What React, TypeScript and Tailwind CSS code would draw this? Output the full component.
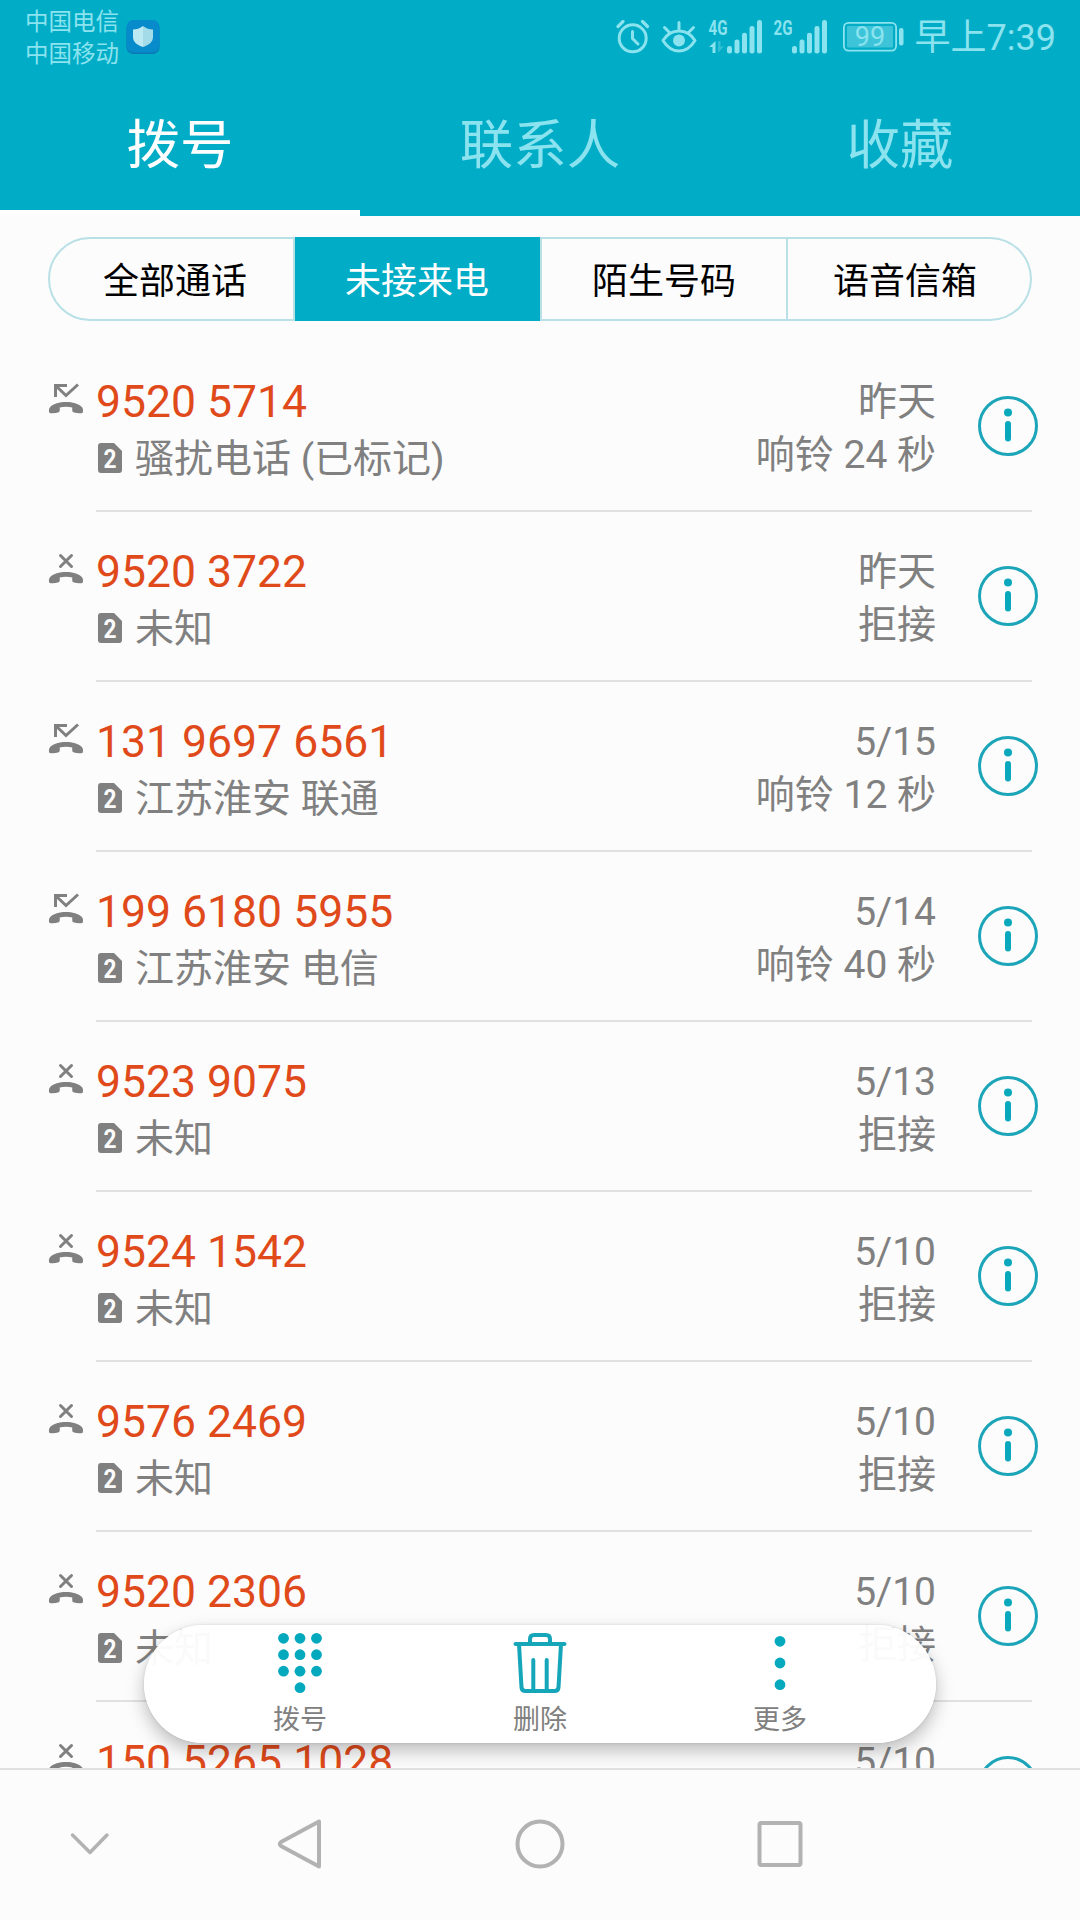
import clsx from "clsx";

type Call = {
  number: string;
  label: string;
  date: string;
  status: string;
  rejected?: boolean;
};

const calls: Call[] = [
  { number: "9520 5714", label: "骚扰电话 (已标记)", date: "昨天", status: "响铃 24 秒" },
  { number: "9520 3722", label: "未知", date: "昨天", status: "拒接", rejected: true },
  { number: "131 9697 6561", label: "江苏淮安 联通", date: "5/15", status: "响铃 12 秒" },
  { number: "199 6180 5955", label: "江苏淮安 电信", date: "5/14", status: "响铃 40 秒" },
  { number: "9523 9075", label: "未知", date: "5/13", status: "拒接", rejected: true },
  { number: "9524 1542", label: "未知", date: "5/10", status: "拒接", rejected: true },
  { number: "9576 2469", label: "未知", date: "5/10", status: "拒接", rejected: true },
  { number: "9520 2306", label: "未知", date: "5/10", status: "拒接", rejected: true },
  { number: "150 5265 1028", label: "未知", date: "5/10", status: "拒接", rejected: true },
];

const tabs = ["拨号", "联系人", "收藏"];

const filters = [
  { label: "全部通话", className: "w-[247px] rounded-l-full border-2 pl-[7px] pt-1.5" },
  { label: "未接来电", className: "w-[245px] bg-[#00acc6] pr-px pt-1.5 text-white" },
  { label: "陌生号码", className: "w-[248px] border-2 pt-1.5" },
  { label: "语音信箱", className: "w-[244px] rounded-r-full border-2 border-l-0 pr-2 pt-1.5" },
];

function ShieldIcon() {
  return (
    <svg width="34" height="34" viewBox="0 0 34 34">
      <rect x="0.5" y="1" width="33" height="33" rx="7" fill="#0b78b4" />
      <rect x="0.5" y="0" width="33" height="32.5" rx="7" fill="#088bcb" />
      <path d="M17 6c3 2.500 6.500 3.500 10 3.600v7.400c0 5-4 8-10 10z" fill="#a3dbe8" />
      <path d="M17 6c-3 2.500-6.500 3.500-10 3.600v7.400c0 5 4 8 10 10z" fill="#bdeaf2" />
    </svg>
  );
}

function AlarmIcon() {
  return (
    <svg width="34" height="34" viewBox="0 0 34 34" fill="none" stroke="currentColor" strokeWidth="3" strokeLinecap="round" strokeLinejoin="round">
      <circle cx="16.700" cy="18.300" r="13.500" />
      <path d="M16.500 11.500v7l5.500 5.500" />
      <path d="M2 6.500l5-5M31.500 6.500l-5-5" strokeWidth="3.200" />
    </svg>
  );
}

function EyeIcon() {
  return (
    <svg width="36" height="34" viewBox="0 0 36 34" fill="none" stroke="currentColor" strokeWidth="3" strokeLinecap="round" strokeLinejoin="round">
      <path d="M2 20.500C6 14 11.500 11 18 11s12 3 16 9.500C30 27 24.500 31 18 31S6 27 2 20.500z" />
      <circle cx="18" cy="20.500" r="6" fill="currentColor" stroke="none" />
      <path d="M18 10V2.500M9 13L3.500 7.500M27 13l5.500-5.500" />
    </svg>
  );
}

function Signal({ type, arrows }: { type: string; arrows?: boolean }) {
  return (
    <svg className="overflow-visible" width="56" height="34" viewBox="0 0 56 34" fill="currentColor">
      <text x="1.500" y="14.500" fontSize="20.500" fontWeight="700" textLength="19" lengthAdjust="spacingAndGlyphs">
        {type}
      </text>
      {arrows && (
        <>
          <path d="M8.500 21v12H5.500v-6H2z" />
          <path d="M11 21v12l6-6.500h-3.500V21z" opacity="0.35" />
        </>
      )}
      <rect x="20" y="26" width="5" height="7.500" rx="2.300" />
      <rect x="27.500" y="19.500" width="5" height="14" rx="2.300" />
      <rect x="35" y="12.700" width="5" height="20.800" rx="2.300" />
      <rect x="42.500" y="6" width="5" height="27.500" rx="2.300" />
      <rect x="50" y="0" width="5" height="33.500" rx="2.300" />
    </svg>
  );
}

function BatteryIcon() {
  return (
    <svg width="61" height="30" viewBox="0 0 61 30" fill="none">
      <rect x="0.900" y="0.900" width="52.200" height="27.700" rx="4.500" stroke="currentColor" strokeWidth="1.800" />
      <rect x="4" y="4" width="46" height="21.500" rx="1" fill="currentColor" opacity="0.45" />
      <rect x="56" y="6" width="4.500" height="17.500" rx="2" fill="currentColor" />
      <text x="27" y="24" fontSize="27" textAnchor="middle" fill="currentColor">
        99
      </text>
    </svg>
  );
}

function CallIcon({ rejected }: { rejected?: boolean }) {
  return (
    <svg width="36" height="34" viewBox="0 0 36 34" fill="none" stroke="#808080" strokeWidth="3">
      {rejected ? (
        <path d="M12.500 4.500l11 11M23.500 4.500l-11 11" strokeLinecap="round" />
      ) : (
        <path d="M7.500 16V4.500H19M7.500 4.500L18 14.500L30 3.500" />
      )}
      <path
        d="M18 21c6.500 0 12.500 1.500 15.800 5 1.800 2 1.400 4.400.7 6-3 .5-6.500.2-9.200-.8-1-.5-1.300-1.500-1-4.700-4-1-8.600-1-12.600 0 .3 3.200 0 4.200-1 4.700-2.700 1-6.200 1.300-9.200.8-.7-1.600-1.100-4 .7-6C5.500 22.500 11.500 21 18 21z"
        fill="#808080"
        stroke="none"
      />
    </svg>
  );
}

function SimBadge() {
  return (
    <svg className="overflow-visible" width="24" height="30" viewBox="0 0 24 30">
      <path d="M3 0h13l8 8v19a3 3 0 0 1-3 3H3a3 3 0 0 1-3-3V3a3 3 0 0 1 3-3z" fill="#808080" />
      <text x="12" y="25" fontSize="26" fontWeight="700" textAnchor="middle" textLength="13" lengthAdjust="spacingAndGlyphs" fill="#fcfcfc">
        2
      </text>
    </svg>
  );
}

function InfoIcon() {
  return (
    <svg width="60" height="60" viewBox="0 0 60 60" fill="none">
      <circle cx="30" cy="30" r="28.500" stroke="#1ca5b8" strokeWidth="3" />
      <circle cx="30" cy="16.500" r="4" fill="#0aa8bc" />
      <rect x="27" y="25" width="6" height="20.500" rx="3" fill="#0aa8bc" />
    </svg>
  );
}

function DialpadIcon() {
  return (
    <svg width="60" height="62" viewBox="0 0 60 62" fill="#05a9be">
      {[6.3, 22.7, 39.2].map((y) =>
        [13.5, 30, 46.5].map((x) => <circle key={`${x}-${y}`} cx={x} cy={y} r="5.400" />)
      )}
      <circle cx="30" cy="55.700" r="5.400" />
    </svg>
  );
}

function TrashIcon() {
  return (
    <svg width="60" height="62" viewBox="0 0 60 62" fill="none" stroke="#16a6b9" strokeWidth="4" strokeLinecap="round" strokeLinejoin="round">
      <path d="M5.500 12h49" />
      <path d="M20 12V7q0-4 4-4h12q4 0 4 4v5" />
      <path d="M9 12l2.500 43.500q.3 3.500 4 3.500h29q3.700 0 4-3.500L51 12" />
      <path d="M23.300 28v30M36.700 28v30" />
    </svg>
  );
}

function MoreIcon() {
  return (
    <svg width="60" height="62" viewBox="0 0 60 62" fill="#05a9be">
      <circle cx="30" cy="9.300" r="5.400" />
      <circle cx="30" cy="31" r="5.400" />
      <circle cx="30" cy="52.700" r="5.400" />
    </svg>
  );
}

const actions = [
  { label: "拨号", icon: <DialpadIcon /> },
  { label: "删除", icon: <TrashIcon /> },
  { label: "更多", icon: <MoreIcon /> },
];

function StatusBar() {
  return (
    <div className="flex h-[72px] items-center justify-between pl-[25px] pr-6 pt-0.5 text-[#8ae3ee]">
      <div className="flex items-center gap-[7px]">
        <div className="pt-0.5 text-[23.5px] leading-8">
          <p>中国电信</p>
          <p>中国移动</p>
        </div>
        <ShieldIcon />
      </div>
      <div className="flex items-center">
        <AlarmIcon />
        <div className="ml-[11px]">
          <EyeIcon />
        </div>
        <div className="ml-[10px]">
          <Signal type="4G" arrows />
        </div>
        <div className="ml-[9px]">
          <Signal type="2G" />
        </div>
        <div className="ml-[15px]">
          <BatteryIcon />
        </div>
        <span className="ml-[11px] pt-[3px] text-[36px] leading-[67px]">早上7:39</span>
      </div>
    </div>
  );
}

function CallRow({ call }: { call: Call }) {
  return (
    <li className="flex h-[170px] shrink-0 pl-12">
      <div className="w-12 pt-[39px]">
        <CallIcon rejected={call.rejected} />
      </div>
      <div className="mr-12 flex flex-1 border-b-2 border-[#e1e1e1]">
        <div className="flex-1 pt-[33px]">
          <p className="text-[44.5px] leading-[54px] text-[#e04a1b]">{call.number}</p>
          <div className="flex items-center gap-[13px] pl-0.5 text-[39px] leading-[55px]">
            <SimBadge />
            <span className="pt-[3px]">{call.label}</span>
          </div>
        </div>
        <div className="pt-[34px] text-right text-[39px] leading-[53px]">
          <p>{call.date}</p>
          <p>{call.status}</p>
        </div>
        <div className="-mr-1.5 ml-[42px] pt-[54px]">
          <InfoIcon />
        </div>
      </div>
    </li>
  );
}

export default function App() {
  return (
    <main lang="zh-CN" className="flex h-[1920px] w-[1080px] flex-col overflow-hidden bg-[#fcfcfc] font-[Roboto,'Noto_Sans_CJK_SC',sans-serif] text-[#808080]">
      <header className="h-[216px] shrink-0 bg-[#00acc6]">
        <StatusBar />
        <nav className="flex h-36">
          {tabs.map((tab, i) => (
            <div
              key={tab}
              className={clsx(
                "flex flex-1 justify-center border-b-[6px] pt-[5px] text-[53.5px] leading-[133px]",
                i === 0 ? "border-white text-white" : "border-transparent text-[#8ae3ee]"
              )}
            >
              <span className="pt-0.5">{tab}</span>
            </div>
          ))}
        </nav>
      </header>

      <section className="relative flex min-h-0 flex-1 flex-col overflow-hidden">
        <div className="mx-12 mt-[21px] flex h-[84px] shrink-0 text-[36px] leading-[74px] text-black">
          {filters.map((filter) => (
            <div key={filter.label} className={clsx("flex items-center justify-center border-[#b8e0e6]", filter.className)}>
              {filter.label}
            </div>
          ))}
        </div>

        <ul className="mt-[21px] flex flex-col">
          {calls.map((call) => (
            <CallRow key={call.number} call={call} />
          ))}
        </ul>

        {/* floating action bar over the list */}
        <div className="absolute bottom-[25px] left-36 flex h-[118px] w-[792px] items-start justify-center rounded-full bg-white/96 pt-[7px] shadow-[0_8px_18px_rgba(0,0,0,0.25),0_0_3px_rgba(0,0,0,0.12)]">
          {actions.map((action) => (
            <div key={action.label} className="flex w-60 flex-col items-center">
              {action.icon}
              <span className="mt-1.5 text-[27px] leading-[40px]">{action.label}</span>
            </div>
          ))}
        </div>
      </section>

      <footer className="h-[152px] shrink-0 border-t-2 border-[#e0e0e0]">
        <div className="flex h-[150px] items-center pb-[3px]">
          <svg width="180" height="60" viewBox="0 0 180 60" fill="none" stroke="#b2b2b2" strokeWidth="3.500" strokeLinecap="round" strokeLinejoin="round">
            <path d="M72.500 21l17.500 17.500L107 21" />
          </svg>
          <svg className="ml-[90px]" width="60" height="60" viewBox="0 0 60 60" fill="none" stroke="#b2b2b2" strokeWidth="4" strokeLinejoin="round">
            <path d="M49 7.500v45L11 32q-2.500-2 0-4z" />
          </svg>
          <svg className="ml-[180px]" width="60" height="60" viewBox="0 0 60 60" fill="none" stroke="#b2b2b2" strokeWidth="4">
            <circle cx="30" cy="30" r="22.500" />
          </svg>
          <svg className="ml-[180px]" width="60" height="60" viewBox="0 0 60 60" fill="none" stroke="#b2b2b2" strokeWidth="4">
            <rect x="9.500" y="9" width="41" height="42" rx="2" />
          </svg>
        </div>
      </footer>
    </main>
  );
}
